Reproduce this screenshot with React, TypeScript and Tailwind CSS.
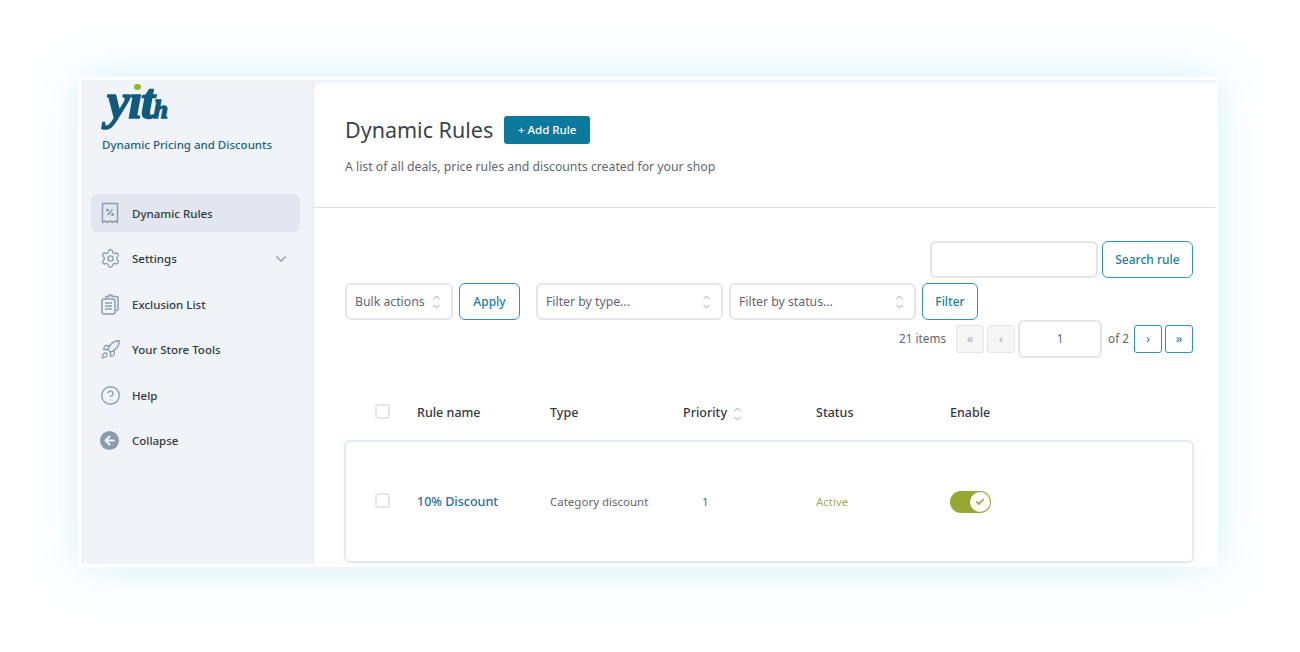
import React from "react";
import { Settings, Rocket, CircleHelp, ChevronDown, ChevronUp, Check } from "lucide-react";

const ReceiptIcon = () => (
    <svg width="20" height="22" viewBox="0 0 20 22" fill="none" stroke="#8b9bb0" strokeWidth="1.5" strokeLinejoin="round">
        <path d="M2.500 1.500h15v19l-2.500-1.600-2.500 1.600-2.500-1.600-2.500 1.600-2.500-1.600-2.500 1.600z" />
        <path d="M7.500 13l5-5.500" />
        <circle cx="7.500" cy="8" r="0.800" />
        <circle cx="12.500" cy="12.500" r="0.800" />
    </svg>
);

const ClipboardIcon = () => (
    <svg width="20" height="21" viewBox="0 0 20 21" fill="none" stroke="#8b9bb0" strokeWidth="1.500" strokeLinejoin="round">
        <path d="M6 4V2.500h3V1h3v1.500h4.500c1 0 1.500 .5 1.500 1.500v11c0 1-.5 1.500-1.500 1.500H16" />
        <rect x="2" y="5" width="13" height="15" rx="2" />
        <path d="M5 9h7M5 12h7M5 15h7" />
    </svg>
);

const CollapseIcon = () => (
    <svg width="19" height="19" viewBox="0 0 19 19">
        <circle cx="9.500" cy="9.500" r="9.500" fill="#8b9bb0" />
        <path d="M14 9.500H6M9.500 5.500l-4 4 4 4" fill="none" stroke="#f0f4f9" strokeWidth="2" strokeLinecap="round" strokeLinejoin="round" />
    </svg>
);

const UpDown = () => (
    <span className="flex flex-col items-center text-[#6f757c]">
        <ChevronUp size={11} strokeWidth={1.500} className="-mb-[2px]" />
        <ChevronDown size={11} strokeWidth={1.500} />
    </span>
);

const Logo = () => (
    <div className="relative ml-[5px] h-[45px] w-[70px] font-['Liberation_Serif',serif] font-bold italic leading-none text-[#0f5a7d] [-webkit-text-stroke:1.500px_#0f5a7d]">
        <span className="text-[51px] leading-[40px] tracking-[-1.500px]">yıt</span>
        <span className="text-[26px] leading-[40px]">h</span>
        <span className="absolute left-[27px] top-[3px] h-[6px] w-[7px] rounded-full bg-[#9ab52a]" />
    </div>
);

const menu = [
    { label: "Dynamic Rules", icon: <ReceiptIcon />, active: true },
    { label: "Settings", icon: <Settings size={21} strokeWidth={1.500} color="#8b9bb0" />, arrow: true },
    { label: "Exclusion List", icon: <ClipboardIcon /> },
    { label: "Your Store Tools", icon: <Rocket size={21} strokeWidth={1.500} color="#8b9bb0" /> },
    { label: "Help", icon: <CircleHelp size={21} strokeWidth={1.500} color="#8b9bb0" /> },
    { label: "Collapse", icon: <CollapseIcon /> },
];

const Select = ({ label, width }: { label: string; width: string }) => (
    <div className={`flex h-[37px] items-center justify-between rounded-md border-2 border-[#e4e6ea] bg-white pl-[8px] pr-[9px] text-[12.250px] text-[#5f6670] ${width}`}>
        <span className="pt-[1px]">{label}</span>
        <UpDown />
    </div>
);

const OutlineButton = ({ label, width }: { label: string; width: string }) => (
    <button className={`h-[37px] rounded-md border border-[#2f95ad] bg-white text-[12px] font-medium text-[#1a7f9e] ${width}`}>{label}</button>
);

const Pager = ({ label, on }: { label: string; on?: boolean }) => (
    <span
        className={
            on
                ? "flex h-[28px] w-[28px] items-center justify-center rounded-[3px] border border-[#2f95ad] bg-white text-[13px] text-[#1a7f9e]"
                : "flex h-[28px] w-[28px] items-center justify-center rounded-[3px] border border-[#e4e4e4] bg-[#f6f6f6] text-[13px] text-[#a8adb3]"
        }
    >
        {label}
    </span>
);

const Box = () => <span className="block h-[15px] w-[15px] rounded-[3px] border-2 border-[#e4e6ea] bg-white" />;

const App = () => {
    return (
        <div className="h-[652px] w-[1300px] overflow-hidden bg-white pl-[78px] pt-[77px] font-['Noto_Sans',sans-serif]">
            <div className="flex h-[490px] w-[1140px] border-[3px] border-white bg-[#f0f4f9] shadow-[0_0_45px_rgba(150,220,235,0.4)]">
                <aside className="w-[233px] shrink-0 border-r border-[#e6e8ee]">
                    <div className="pl-[21px] pt-[1px]">
                        <Logo />
                        <p className="mt-[11px] text-[11.500px] font-medium leading-[16px] text-[#1c6180]">Dynamic Pricing and Discounts</p>
                    </div>
                    <nav className="ml-[10px] mt-[41px] w-[209px]">
                        {menu.map((m) => (
                            <div
                                key={m.label}
                                className={`mb-[7.500px] flex h-[38px] items-center rounded-md pl-[9px] pr-[10px] ${m.active ? "bg-[#e2e7ef]" : ""}`}
                            >
                                <span className="flex w-[32px] shrink-0 items-center">{m.icon}</span>
                                <span className="pt-[1px] text-[11.500px] font-medium text-[#33393f]">{m.label}</span>
                                {m.arrow && <ChevronDown size={18} strokeWidth={1.500} color="#8b9bb0" className="ml-auto" />}
                            </div>
                        ))}
                    </nav>
                </aside>

                <main className="mt-[3px] h-[481px] w-[901px] overflow-hidden rounded-tl-lg bg-white">
                    <header className="border-b border-[#dcdfe6] pb-[30px] pl-[31px] pt-[33px]">
                        <div className="flex items-center">
                            <h1 className="text-[21.500px] font-normal leading-[28px] text-[#3c434a]">Dynamic Rules</h1>
                            <button className="ml-[11px] h-[28px] w-[86px] rounded-[3px] bg-[#0b7a9c] text-[11.500px] font-medium text-white">+ Add Rule</button>
                        </div>
                        <p className="mt-[13px] text-[12.250px] leading-[20px] text-[#5f6670]">A list of all deals, price rules and discounts created for your shop</p>
                    </header>

                    <section className="pl-[31px] pr-[22px] pt-[33px]">
                        <div className="flex justify-end gap-[4px]">
                            <div className="h-[37px] w-[168px] rounded-md border-2 border-[#e4e6ea]" />
                            <OutlineButton label="Search rule" width="w-[91px]" />
                        </div>
                        <div className="mt-[5px] flex">
                            <Select label="Bulk actions" width="w-[108px]" />
                            <div className="ml-[6px]">
                                <OutlineButton label="Apply" width="w-[61px]" />
                            </div>
                            <div className="ml-[16px]">
                                <Select label="Filter by type..." width="w-[187px]" />
                            </div>
                            <div className="ml-[6px]">
                                <Select label="Filter by status..." width="w-[187px]" />
                            </div>
                            <div className="ml-[6px]">
                                <OutlineButton label="Filter" width="w-[56px]" />
                            </div>
                        </div>
                        <div className="flex h-[38px] items-center justify-end text-[11.750px] text-[#5f6670]">
                            <span className="mr-[10px]">21 items</span>
                            <div className="flex gap-[3px]">
                                <Pager label="«" />
                                <Pager label="‹" />
                            </div>
                            <div className="ml-[3px] flex h-[38px] w-[84px] items-center justify-center rounded-md border-2 border-[#e4e6ea]">1</div>
                            <span className="ml-[6px] mr-[5px]">of 2</span>
                            <div className="flex gap-[3px]">
                                <Pager label="›" on />
                                <Pager label="»" on />
                            </div>
                        </div>

                        <div className="mt-[42px] grid h-[26px] grid-cols-[72px_133px_133px_133px_134px_1fr] items-center pt-[1px] text-[12.500px] font-medium text-[#33393f]">
                            <span className="-mt-[4px] pl-[30px]">
                                <Box />
                            </span>
                            <span>Rule name</span>
                            <span>Type</span>
                            <span className="flex items-center gap-[5px]">
                                Priority
                                <UpDown />
                            </span>
                            <span>Status</span>
                            <span>Enable</span>
                        </div>

                        <div className="-mx-[1px] mt-[14px] grid h-[123px] grid-cols-[71px_133px_133px_133px_134px_1fr] items-center rounded-md border-2 border-[#e3ebf2] text-[11.500px] text-[#5f6670] shadow-[0_0_12px_rgba(200,225,240,0.25)]">
                            <span className="-mt-[3px] pl-[29px]">
                                <Box />
                            </span>
                            <span className="pt-[1px] text-[12.500px] font-medium text-[#1f6fa8]">10% Discount</span>
                            <span>Category discount</span>
                            <span className="pl-[19px]">1</span>
                            <span className="text-[#a3ad5c]">Active</span>
                            <span className="flex h-[22px] w-[41px] items-center justify-end rounded-full bg-[#97a832] pr-[1px]">
                                <span className="flex h-[20px] w-[20px] items-center justify-center rounded-full bg-white">
                                    <Check size={10} strokeWidth={4} color="#97a832" />
                                </span>
                            </span>
                        </div>
                    </section>
                </main>
            </div>
        </div>
    );
};

export default App;
